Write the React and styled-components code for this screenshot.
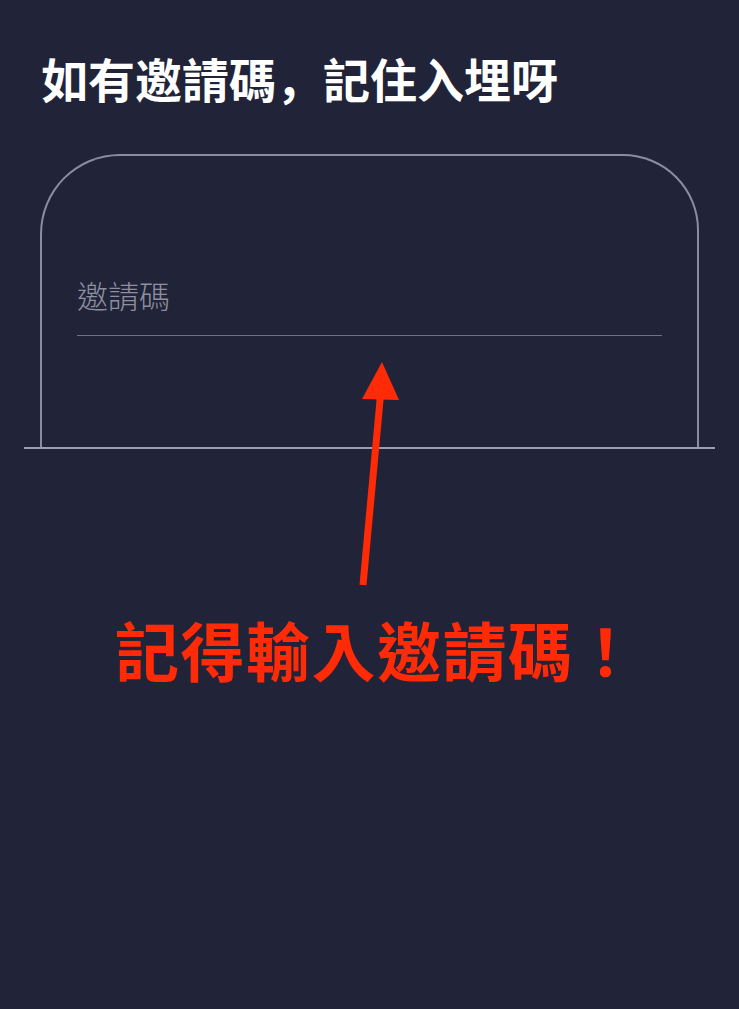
import React from "react";
import styled, { createGlobalStyle } from "styled-components";

const GlobalStyle = createGlobalStyle`
  html, body {
    margin: 0;
    padding: 0;
    background: #212438;
  }
  * { box-sizing: border-box; }
`;

const Page = styled.div`
  position: relative;
  min-height: 1009px;
  background: #212438;
  font-family: "Noto Sans CJK TC", "Noto Sans", sans-serif;
  padding-top: 54px;
  overflow: hidden;
`;

const Title = styled.h1`
  margin: 0;
  padding-left: 41px;
  font-family: "Noto Sans CJK SC", "Noto Sans CJK TC", sans-serif;
  font-size: 47px;
  line-height: 47px;
  font-weight: 700;
  color: #ffffff;
`;

const Section = styled.div`
  margin: 53px 24px 0;
  padding: 0 16px;
  border-bottom: 2px solid #9c9eb0;
`;

const Card = styled.div`
  height: 293px;
  border: 2px solid #8a8ca2;
  border-bottom: none;
  border-radius: 80px 76px 0 0;
  padding: 123px 35px 0 35px;
`;

const Field = styled.div`
  border-bottom: 1px solid #6f7287;
  padding-bottom: 25px;
`;

const Placeholder = styled.span`
  display: block;
  font-size: 31px;
  line-height: 31px;
  font-weight: 300;
  color: #8d8f9f;
`;

const Notice = styled.p`
  margin: 167px 0 0;
  padding-left: 115px;
  font-size: 64px;
  line-height: 64px;
  font-weight: 700;
  letter-spacing: 1.5px;
  color: #ff2b06;
  white-space: nowrap;
`;

const Arrow = styled.svg`
  position: absolute;
  left: 355px;
  top: 355px;
  width: 50px;
  height: 240px;
  overflow: visible;
`;

export default function App() {
  return (
    <>
      <GlobalStyle />
      <Page>
        <Title>如有邀請碼，記住入埋呀</Title>
        <Section>
          <Card>
            <Field>
              <Placeholder>邀請碼</Placeholder>
            </Field>
          </Card>
        </Section>
        <Notice>記得輸入邀請碼！</Notice>
        <Arrow viewBox="0 0 50 240">
          <line x1="25.5" y1="40" x2="8" y2="230" stroke="#ff2b06" strokeWidth="7" />
          <polygon points="27,7 7,44 44,45" fill="#ff2b06" />
        </Arrow>
      </Page>
    </>
  );
}
